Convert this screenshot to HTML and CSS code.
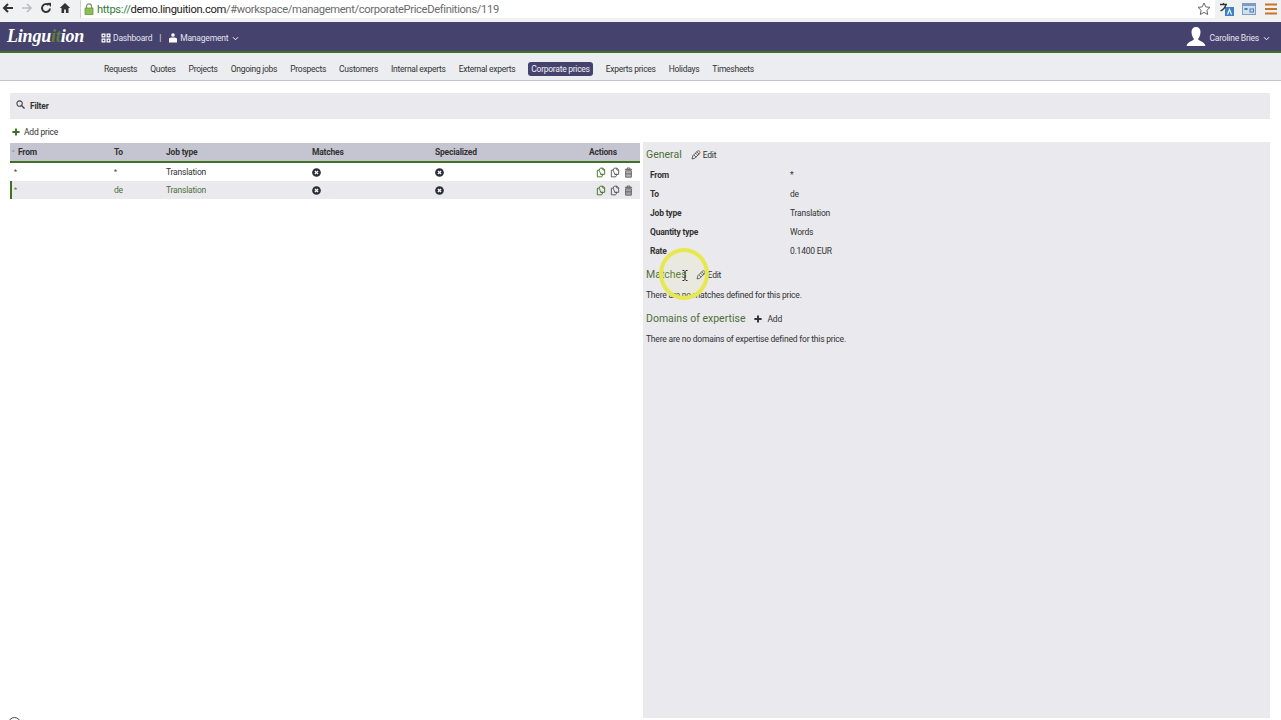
FILE: index.html
```html
<!DOCTYPE html>
<html lang="en">
  <head>
    <meta charset="UTF-8" />
    <title>Linguition - Corporate prices</title>
    <link rel="stylesheet" href="styles.css">
  </head>
  <body>
    <svg class="defs" width="0" height="0">
      <symbol id="copy" viewBox="0 0 12 12">
        <path d="M5 .8h3.400l2 2v5.400H5.500 M5 .8L3.800 3.200 M8.200 .8v2.200h2.200 M3.800 3.200H1.600v8h5.200l1.600-3" fill="none" stroke="currentColor" stroke-width="1.100" stroke-linejoin="round"/>
        <path d="M3.800 3.200l2 5h2.600" fill="none" stroke="currentColor" stroke-width="1"/>
      </symbol>
      <symbol id="trash" viewBox="0 0 10 12">
        <path d="M1 2.500h8 M3.500 2.500V1h3v1.500" fill="none" stroke="currentColor" stroke-width="1"/>
        <path d="M1.800 4h6.400v7.200H1.800z" fill="currentColor" opacity=".45"/>
        <path d="M1.800 4h6.400v7.200H1.800z M1.800 7.500h6.400" fill="none" stroke="currentColor" stroke-width=".9"/>
      </symbol>
      <symbol id="cross" viewBox="0 0 12 12">
        <circle cx="6" cy="6" r="5.800" fill="currentColor"/>
        <path d="M3.900 3.900l4.200 4.200M8.100 3.900l-4.200 4.200" stroke="#fff" stroke-width="1.700"/>
      </symbol>
      <symbol id="pencil" viewBox="0 0 12 12">
        <path d="M1.200 10.800l.9-3.800L7.700 1.300c1-.8 2.200-.3 2.700.4.500.8.500 1.700-.3 2.600L4.600 9.900z M3.300 5.800l3 3 M5.300 3.700l3 3 M7 2.200l3 3" fill="none" stroke="currentColor" stroke-width=".9" stroke-linejoin="round"/>
      </symbol>
      <symbol id="plus" viewBox="0 0 10 10">
        <path d="M5 .5v9M.5 5h9" stroke="currentColor" stroke-width="2.400"/>
      </symbol>
    </svg>

    <div class="browser-bar">
      <svg class="nav-icon" viewBox="0 0 12 12"><path d="M11 6H2M6 2L2 6l4 4" fill="none" stroke="#333" stroke-width="2"/></svg>
      <svg class="nav-icon" viewBox="0 0 12 12"><path d="M1 6h9M6 2l4 4-4 4" fill="none" stroke="#b9bcc2" stroke-width="1.600"/></svg>
      <svg class="nav-icon" viewBox="0 0 12 12"><path d="M10 6.500A4 4 0 1 1 8.600 3" fill="none" stroke="#333" stroke-width="2"/><path d="M7 1l4-.2V5z" fill="#333"/></svg>
      <svg class="nav-icon" viewBox="0 0 12 12"><path d="M6 1L.8 6H2.500v5h2.600V7.500h1.800V11h2.600V6h1.700z" fill="#333"/></svg>
      <div class="url-box">
        <svg class="lock" viewBox="0 0 10 12"><path d="M2.500 5V3.400a2.500 2.500 0 0 1 5 0V5" fill="none" stroke="#7a9a6a" stroke-width="1.200"/><rect x="1" y="5" width="8" height="6.500" fill="#8cc152" stroke="#5d8a3a" stroke-width=".7"/></svg>
        <span class="url-https">https://</span><span class="url-host">demo.linguition.com</span><span class="url-path">/#workspace/management/corporatePriceDefinitions/119</span>
        <svg class="star" viewBox="0 0 14 14"><path d="M7 1l1.800 3.900 4.200.5-3.100 2.900.8 4.200L7 10.400 3.300 12.500l.8-4.200L1 5.400l4.200-.5z" fill="none" stroke="#666" stroke-width="1"/></svg>
      </div>
      <div class="ext-icons">
        <svg class="ext" viewBox="0 0 14 14"><rect x="5" y="5" width="9" height="9" fill="#3f7fc4"/><path d="M0 2.500h7M3.500 1v1.500M6 2.500C5 6 3 8 .5 9" fill="none" stroke="#333" stroke-width="1.300"/><path d="M7.500 12.500l2-5 2 5" fill="none" stroke="#fff" stroke-width="1.100"/></svg>
        <svg class="ext" viewBox="0 0 14 14"><rect x=".5" y="1.500" width="13" height="11" fill="#cfe0f2" stroke="#7d9cc0"/><rect x=".5" y="1.500" width="13" height="2.500" fill="#7d9cc0"/><rect x="2.500" y="6" width="3" height="2" fill="#4b7bb0"/><rect x="8" y="7" width="3.500" height="3" fill="none" stroke="#4b7bb0"/></svg>
        <svg class="ext" viewBox="0 0 14 14"><path d="M1 2.500h12M1 7h12M1 11.500h12" stroke="#c8742c" stroke-width="2.200"/></svg>
      </div>
    </div>

    <header class="top-bar">
      <div class="logo">Lingu<span class="logo-it">it</span>ion</div>
      <a class="top-link">
        <svg class="top-icon" viewBox="0 0 10 10"><path d="M.5.500h4v4h-4z M5.500.500h4v4h-4z M.5 5.500h4v4h-4z M5.500 5.500h4v4h-4z M1.700 1.700v1.600h1.600V1.700z M6.700 1.700v1.600h1.600V1.700z M1.700 6.700v1.600h1.600V6.700z M6.700 6.700v1.600h1.600V6.700z" fill="#fff" fill-rule="evenodd"/></svg>
        Dashboard
      </a>
      <span class="top-sep">|</span>
      <a class="top-link">
        <svg class="top-icon" viewBox="0 0 10 10"><circle cx="5" cy="2" r="1.800" fill="#fff"/><path d="M1 9.500V5.500l2-1h4l2 1v4z" fill="#fff"/></svg>
        Management
        <svg class="chevron" viewBox="0 0 8 6"><path d="M1 1.500l3 3 3-3" fill="none" stroke="#fff" stroke-width="1.200"/></svg>
      </a>
      <a class="user">
        <svg class="avatar" viewBox="0 0 20 20"><path d="M10 0c3 0 4.500 2 4.500 5s-1.500 6-2.500 7c.5 2 6.500 2.500 7.500 7H.5c1-4.500 7-5 7.500-7-1-1-2.500-4-2.500-7S7 0 10 0z" fill="#fff"/></svg>
        Caroline Bries
        <svg class="chevron" viewBox="0 0 8 6"><path d="M1 1.500l3 3 3-3" fill="none" stroke="#fff" stroke-width="1.200"/></svg>
      </a>
    </header>

    <nav class="sub-nav">
      <a>Requests</a>
      <a>Quotes</a>
      <a>Projects</a>
      <a>Ongoing jobs</a>
      <a>Prospects</a>
      <a>Customers</a>
      <a>Internal experts</a>
      <a>External experts</a>
      <a class="active">Corporate prices</a>
      <a>Experts prices</a>
      <a>Holidays</a>
      <a>Timesheets</a>
    </nav>

    <main class="page">
      <div class="filter">
        <svg class="filter-icon" viewBox="0 0 10 10"><circle cx="4" cy="4" r="3" fill="none" stroke="#444" stroke-width="1.200"/><path d="M6.300 6.300L9.500 9.500" stroke="#444" stroke-width="1.500"/></svg>
        Filter
      </div>
      <div class="add-price">
        <svg class="plus green" viewBox="0 0 10 10"><use href="#plus"/></svg>
        Add price
      </div>

      <div class="columns">
        <section class="prices">
          <div class="row head">
            <div class="from-head"><span class="sort">^</span>From</div>
            <div>To</div>
            <div>Job type</div>
            <div>Matches</div>
            <div>Specialized</div>
            <div class="actions-head">Actions</div>
          </div>
          <div class="row">
            <div class="star-cell">*</div>
            <div class="star-cell">*</div>
            <div>Translation</div>
            <div><svg class="state"><use href="#cross"/></svg></div>
            <div><svg class="state"><use href="#cross"/></svg></div>
            <div class="actions">
              <svg class="act green"><use href="#copy"/></svg>
              <svg class="act"><use href="#copy"/></svg>
              <svg class="act trash"><use href="#trash"/></svg>
            </div>
          </div>
          <div class="row selected">
            <div class="star-cell">*</div>
            <div>de</div>
            <div>Translation</div>
            <div><svg class="state"><use href="#cross"/></svg></div>
            <div><svg class="state"><use href="#cross"/></svg></div>
            <div class="actions">
              <svg class="act green"><use href="#copy"/></svg>
              <svg class="act"><use href="#copy"/></svg>
              <svg class="act trash"><use href="#trash"/></svg>
            </div>
          </div>
        </section>

        <aside class="details">
          <div class="section-title">
            <h3>General</h3>
            <a class="tool"><svg class="tool-icon"><use href="#pencil"/></svg>Edit</a>
          </div>
          <dl class="fields">
            <dt>From</dt><dd>*</dd>
            <dt>To</dt><dd>de</dd>
            <dt>Job type</dt><dd>Translation</dd>
            <dt>Quantity type</dt><dd>Words</dd>
            <dt>Rate</dt><dd>0.1400 EUR</dd>
          </dl>
          <div class="section-title matches-title">
            <h3>Matches</h3>
            <a class="tool"><svg class="tool-icon"><use href="#pencil"/></svg>Edit</a>
          </div>
          <p class="empty">There are no matches defined for this price.</p>
          <div class="section-title domains-title">
            <h3>Domains of expertise</h3>
            <a class="tool"><svg class="tool-icon plus-small"><use href="#plus"/></svg>Add</a>
          </div>
          <p class="empty">There are no domains of expertise defined for this price.</p>
        </aside>
      </div>
    </main>

    <!-- video recording overlay: cursor highlight -->
    <div class="cursor-ring"></div>
    <svg class="cursor-beam" viewBox="0 0 6 11"><path d="M.5.500h1.500l1 1 1-1h1.500 M3 1.500v8 M.5 10.500h1.500l1-1 1 1h1.500" fill="none" stroke="#222" stroke-width="1"/></svg>
    <div class="corner-mark"></div>
  </body>
</html>
```

FILE: styles.css
```css
* {
  box-sizing: border-box;
}
html,
body {
  height: 720px;
  overflow: hidden;
}
body {
  margin: 0;
  background: #fff;
  color: #333;
  font-family: Roboto, sans-serif;
  font-size: 8.5px;
  letter-spacing: -.2px;
  position: relative;
}
.defs {
  position: absolute;
}

/* browser chrome */
.browser-bar {
  height: 22px;
  background: #f0f1f3;
  display: flex;
  align-items: flex-start;
  padding: 2px 0 0 2px;
}
.nav-icon {
  width: 12px;
  height: 12px;
  margin-right: 7px;
  flex: none;
}
.url-box {
  flex: 1;
  height: 18px;
  margin: -2px 0 0 2px;
  background: #fff;
  border-left: 1px solid #d0d2d6;
  display: flex;
  align-items: center;
  padding-left: 3px;
  font-size: 11.2px;
  letter-spacing: -.35px;
}
.lock {
  width: 10px;
  height: 12px;
  margin-right: 3px;
}
.url-https {
  color: #2f7d3c;
}
.url-host {
  color: #222;
}
.url-path {
  color: #6b6b6b;
}
.star {
  width: 14px;
  height: 14px;
  margin-left: auto;
  margin-right: 4px;
}
.ext-icons {
  display: flex;
  gap: 8px;
  padding: 0 3px 0 5px;
}
.ext {
  width: 14px;
  height: 14px;
}

/* top bar */
.top-bar {
  height: 31px;
  background: #45426e;
  border-bottom: 2px solid #3f7320;
  box-shadow: 0 1px 0 #d8dade;
  color: #fff;
  display: flex;
  align-items: center;
  padding: 3px 0 0 7px;
}
.logo {
  width: 94px;
  font-family: "Liberation Serif", serif;
  font-style: italic;
  font-weight: bold;
  font-size: 18px;
  letter-spacing: -.2px;
  margin-top: -4px;
}
.logo-it {
  color: #5f7f3a;
}
.top-link {
  display: flex;
  align-items: center;
  color: #e4e4ee;
}
.top-icon {
  width: 10px;
  height: 10px;
  margin-right: 2px;
}
.top-sep {
  margin: 0 7px;
  color: #e4e4ee;
}
.chevron {
  width: 7px;
  height: 5px;
  margin-left: 4px;
}
.user {
  margin-left: auto;
  padding-right: 11px;
  display: flex;
  align-items: center;
  color: #e4e4ee;
}
.avatar {
  width: 20px;
  height: 20px;
  margin: -3px 3px 0 0;
}

/* second nav */
.sub-nav {
  height: 28px;
  background: #ecedf0;
  border-bottom: 1px solid #c3c4cf;
  display: flex;
  align-items: center;
  gap: 13px;
  padding: 4px 0 0 104px;
  letter-spacing: -.27px;
}
.sub-nav a {
  color: #333;
}
.sub-nav .active {
  background: #45426e;
  color: #f0f0f5;
  border-radius: 3px;
  padding: 2px 3px;
}

/* page */
.page {
  padding: 12px 11px 0 10px;
}
.filter {
  height: 26px;
  background: #e9e9ee;
  display: flex;
  align-items: center;
  padding: 0 0 1px 6px;
  font-weight: 700;
}
.filter-icon {
  width: 9px;
  height: 9px;
  margin-right: 5px;
  margin-top: -3px;
}
.add-price {
  height: 24px;
  display: flex;
  align-items: center;
  padding: 2px 0 0 2px;
}
.plus {
  width: 8px;
  height: 8px;
  margin-right: 4px;
  margin-top: -1px;
}
.green {
  color: #3f7320;
}
.columns {
  display: flex;
  gap: 3px;
}
.prices {
  width: 630px;
  flex: none;
}
.row {
  display: grid;
  grid-template-columns: 100px 52px 146px 123px 161px 1fr;
  align-items: center;
  height: 18px;
  padding-left: 4px;
}
.row.head {
  height: 20px;
  background: #c4c5d1;
  border-bottom: 2px solid #3f7320;
  font-weight: 700;
  padding-bottom: 1px;
}
.from-head {
  position: relative;
  padding-left: 4px;
}
.sort {
  position: absolute;
  left: -2px;
  top: 1px;
  color: #777;
  font-weight: 400;
  font-size: 6px;
}
.actions-head {
  margin-left: -7px;
}
.row.selected {
  background: #e9e9ee;
  border-left: 2px solid #3f7320;
  padding-left: 2px;
  color: #4f7036;
}
.star-cell {
  font-size: 7px;
}
.state {
  width: 9px;
  height: 9px;
  display: block;
  color: #2b2f3a;
}
.actions {
  display: flex;
  gap: 4px;
  color: #555;
}
.act {
  width: 10px;
  height: 11px;
}
.act.trash {
  width: 9px;
}

/* details panel */
.details {
  flex: 1;
  height: 576px;
  margin-top: -1px;
  background: #e9e9ee;
  padding: 4px 3px;
}
.section-title {
  display: flex;
  align-items: center;
  gap: 9px;
  height: 17px;
}
.section-title h3 {
  margin: 0;
  font-size: 10.5px;
  font-weight: 400;
  letter-spacing: 0;
  color: #4f7036;
}
.tool {
  display: flex;
  align-items: center;
}
.tool-icon {
  width: 10px;
  height: 10px;
  margin-right: 2px;
  color: #333;
}
.plus-small {
  width: 8px;
  height: 8px;
  margin-right: 5px;
}
.fields {
  margin: 2px 0 0;
  padding-left: 4px;
  display: grid;
  grid-template-columns: 140px 1fr;
  grid-auto-rows: 19px;
  align-items: center;
}
.fields dt {
  font-weight: 700;
}
.fields dd {
  margin: 0;
}
.matches-title {
  margin-top: 6px;
}
.empty {
  margin: 6px 0 0;
  height: 12px;
  line-height: 12px;
}
.domains-title {
  margin-top: 9px;
}

/* overlay */
.cursor-ring {
  position: absolute;
  left: 659px;
  top: 248px;
  width: 50px;
  height: 52px;
  border-radius: 50%;
  border: 4px solid #e6e84e;
  background: rgba(240, 240, 120, .12);
  filter: blur(.5px);
}
.cursor-beam {
  position: absolute;
  left: 682px;
  top: 270px;
  width: 6px;
  height: 11px;
}
.corner-mark {
  position: absolute;
  left: 8px;
  top: 717px;
  width: 13px;
  height: 13px;
  border-radius: 50%;
  border: 1px solid #44485a;
}
```
